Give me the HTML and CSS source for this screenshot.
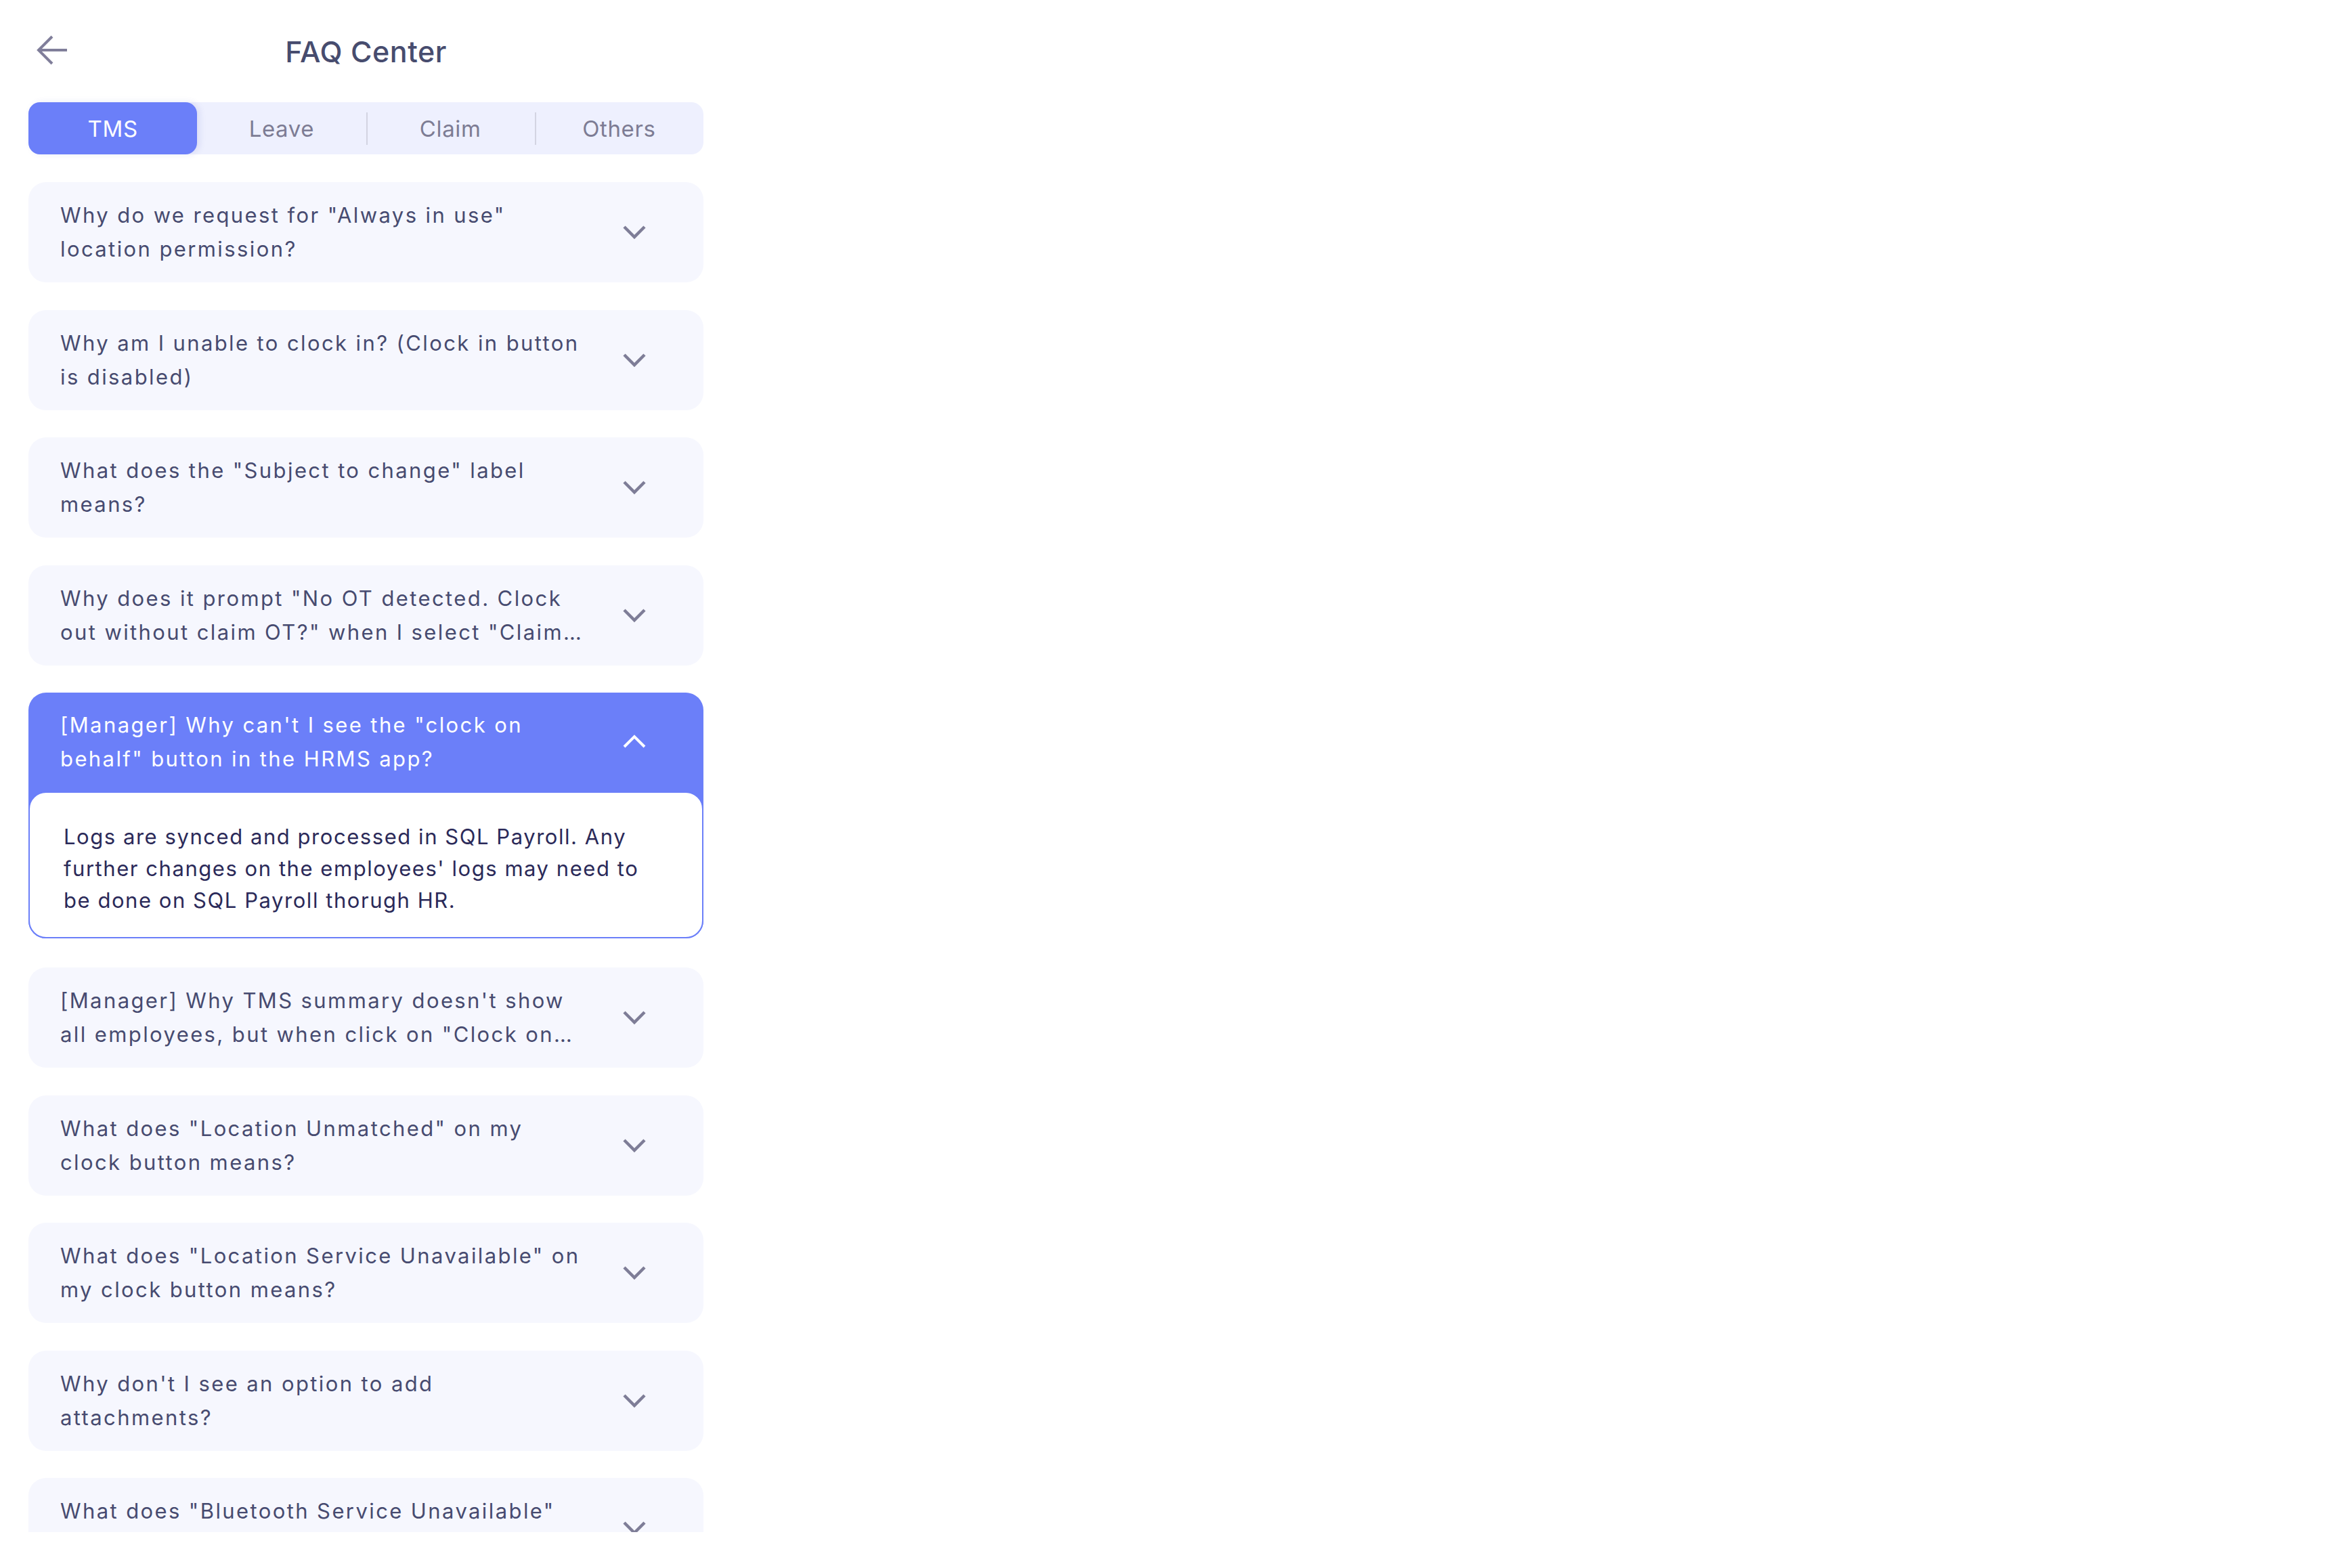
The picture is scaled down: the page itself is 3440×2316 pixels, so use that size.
FILE: index.html
```html
<!DOCTYPE html>
<html lang="en">
<head>
  <meta charset="UTF-8">
  <meta name="viewport" content="width=device-width, initial-scale=1.0">
  <title>FAQ Center</title>
  <link rel="stylesheet" href="styles.css">
</head>
<body>

<div class="page">
  <header class="topbar">
    <button class="back" aria-label="Back">
      <svg width="48" height="48" viewBox="0 0 48 48" fill="none" stroke="#807e9a" stroke-width="4">
        <path d="M46 24H6M24 4L4 24l20 20"/>
      </svg>
    </button>
    <h1 class="title">FAQ Center</h1>
    <span></span>
  </header>

  <nav class="tabs">
    <button class="tab active">TMS</button>
    <button class="tab">Leave</button>
    <button class="tab">Claim</button>
    <button class="tab">Others</button>
  </nav>

  <div class="faq-list">
    <div class="faq">
      <div class="faq-q">
        <p>Why do we request for "Always in use" location permission?</p>
        <svg class="chev" width="36" height="24" viewBox="0 0 36 24"><path d="M3 4l15 15L33 4"/></svg>
      </div>
    </div>
    <div class="faq">
      <div class="faq-q">
        <p>Why am I unable to clock in? (Clock in button is disabled)</p>
        <svg class="chev" width="36" height="24" viewBox="0 0 36 24"><path d="M3 4l15 15L33 4"/></svg>
      </div>
    </div>
    <div class="faq">
      <div class="faq-q">
        <p>What does the "Subject to change" label means?</p>
        <svg class="chev" width="36" height="24" viewBox="0 0 36 24"><path d="M3 4l15 15L33 4"/></svg>
      </div>
    </div>
    <div class="faq">
      <div class="faq-q">
        <p>Why does it prompt "No OT detected. Clock out without claim OT?" when I select "Claim OT"?</p>
        <svg class="chev" width="36" height="24" viewBox="0 0 36 24"><path d="M3 4l15 15L33 4"/></svg>
      </div>
    </div>
    <div class="faq open">
      <div class="faq-q">
        <p>[Manager] Why can't I see the "clock on behalf" button in the HRMS app?</p>
        <svg class="chev" width="36" height="24" viewBox="0 0 36 24"><path d="M3 19L18 4l15 15"/></svg>
      </div>
      <div class="faq-a">
        Logs are synced and processed in SQL Payroll. Any further changes on the employees' logs may need to be done on SQL Payroll thorugh HR.
      </div>
    </div>
    <div class="faq">
      <div class="faq-q">
        <p>[Manager] Why TMS summary doesn't show all employees, but when click on "Clock on behalf" it shows all of them?</p>
        <svg class="chev" width="36" height="24" viewBox="0 0 36 24"><path d="M3 4l15 15L33 4"/></svg>
      </div>
    </div>
    <div class="faq">
      <div class="faq-q">
        <p>What does "Location Unmatched" on my clock button means?</p>
        <svg class="chev" width="36" height="24" viewBox="0 0 36 24"><path d="M3 4l15 15L33 4"/></svg>
      </div>
    </div>
    <div class="faq">
      <div class="faq-q">
        <p>What does "Location Service Unavailable" on my clock button means?</p>
        <svg class="chev" width="36" height="24" viewBox="0 0 36 24"><path d="M3 4l15 15L33 4"/></svg>
      </div>
    </div>
    <div class="faq">
      <div class="faq-q">
        <p>Why don't I see an option to add attachments?</p>
        <svg class="chev" width="36" height="24" viewBox="0 0 36 24"><path d="M3 4l15 15L33 4"/></svg>
      </div>
    </div>
    <div class="faq">
      <div class="faq-q">
        <p>What does "Bluetooth Service Unavailable" on my clock button means?</p>
        <svg class="chev" width="36" height="24" viewBox="0 0 36 24"><path d="M3 4l15 15L33 4"/></svg>
      </div>
    </div>
  </div>
</div>

</body>
</html>
```

FILE: styles.css
```css
body {
  margin: 0;
  background: #fff;
  font-family: Inter, "Noto Sans", sans-serif;
  color: #474b70;
}
.page {
  width: 997px;
  margin-left: 42px;
}
.topbar {
  height: 151px;
  display: grid;
  grid-template-columns: 1fr auto 1fr;
  align-items: center;
}
.back {
  background: none;
  border: 0;
  padding: 0;
  margin: -3px 0 0 11px;
  width: 48px;
  height: 48px;
  cursor: pointer;
}
.back svg {
  display: block;
}
.title {
  margin: 0;
  font-size: 43px;
  font-weight: 500;
  color: #474c6e;
  letter-spacing: 0.5px;
}
.tabs {
  display: flex;
  height: 77px;
  background: #eef0fe;
  border-radius: 18px;
}
.tab {
  flex: 1;
  border: 0;
  background: none;
  font-family: inherit;
  font-size: 33px;
  letter-spacing: 0.6px;
  color: #7d7c94;
  cursor: pointer;
}
.tab:not(.active) + .tab:not(.active) {
  background: linear-gradient(#d3d4e2, #d3d4e2) left center / 2px 48px no-repeat;
}
.tab.active {
  background: #6b7ff9;
  color: #fff;
  border-radius: 17px;
  box-shadow: 4px 0 10px rgba(90, 100, 190, 0.14);
}
.faq-list {
  margin-top: 41px;
  height: 1994px;
  overflow: hidden;
}
.faq {
  background: #f6f7fe;
  border-radius: 26px;
  margin-bottom: 40.5px;
}
.faq-q {
  height: 148px;
  display: flex;
  align-items: center;
  gap: 49px;
  padding: 0 84px 0 47px;
  cursor: pointer;
}
.faq-q p {
  flex: 1;
  margin: 0;
  font-size: 31px;
  line-height: 50px;
  letter-spacing: 2.4px;
  display: -webkit-box;
  -webkit-line-clamp: 2;
  -webkit-box-orient: vertical;
  overflow: hidden;
}
.chev {
  flex: none;
  fill: none;
  stroke: #7e7d97;
  stroke-width: 4.5;
}
.faq.open {
  background: #6b7ff9;
  margin-bottom: 43px;
}
.faq.open .faq-q {
  height: 146px;
  color: #fff;
}
.faq.open .chev {
  stroke: #fff;
  stroke-width: 4;
}
.faq-a {
  background: #fff;
  border: 2px solid #6b7ff9;
  border-radius: 26px;
  padding: 41px 60px 31px 50px;
  font-size: 31px;
  line-height: 47px;
  letter-spacing: 1.55px;
  color: #2b2a59;
}
```
